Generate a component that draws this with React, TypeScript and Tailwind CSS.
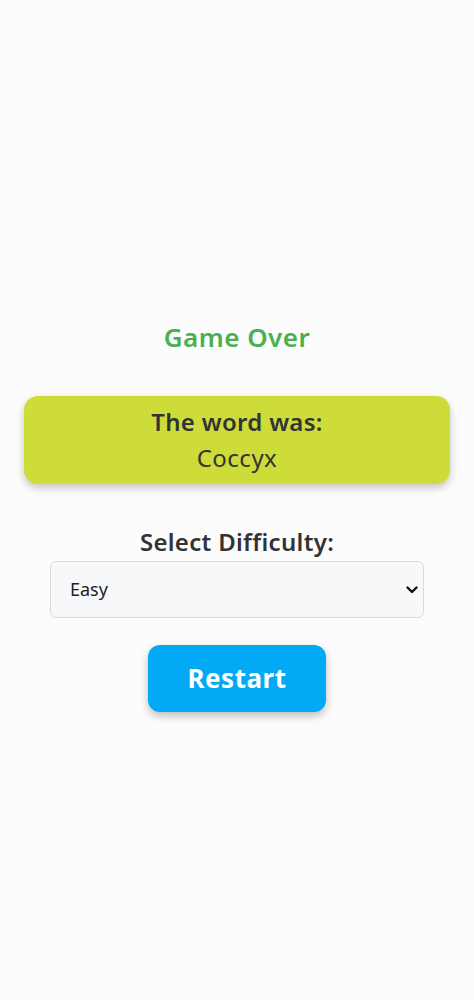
export default function App() {
  return (
    <div
      className="min-h-screen bg-[#fcfcfd] flex flex-col items-center pt-[318px]"
      style={{ fontFamily: '"Noto Sans", "Open Sans", sans-serif' }}
    >
      <h1 className="text-[26px] leading-[38px] font-semibold tracking-[0.5px] text-[#4caf50]">Game Over</h1>

      <div className="mt-[40px] w-[426px] rounded-[14px] bg-[#cddc39] shadow-[0_4px_8px_rgba(0,0,0,0.22)] py-[8px] flex flex-col items-center text-[#333333]">
        <p className="text-[24px] leading-[36px] font-semibold tracking-[0.3px]">The word was:</p>
        <p className="text-[24px] leading-[36px] tracking-[0.5px]">Coccyx</p>
      </div>

      <label className="mt-[40px] text-[24px] leading-[36px] font-semibold tracking-[0.3px] text-[#333333]">
        Select Difficulty:
      </label>
      <div className="relative mt-[1px] w-[374px]">
        <select className="w-full h-[57px] appearance-none rounded-[6px] border border-[#dcdcdc] bg-[#f7f8fa] pl-[19px] pr-[36px] text-[18px] text-[#222222]">
          <option>Easy</option>
          <option>Medium</option>
          <option>Hard</option>
        </select>
        <svg
          className="pointer-events-none absolute right-[6px] top-1/2 -translate-y-1/2"
          width="12"
          height="8"
          viewBox="0 0 12 8"
        >
          <path d="M1.5 1.5 L6 6 L10.5 1.5" fill="none" stroke="#111" strokeWidth="2.4" strokeLinecap="round" strokeLinejoin="round" />
        </svg>
      </div>

      <button className="mt-[27px] w-[178px] h-[67px] rounded-[12px] bg-[#03a9f4] text-white text-[26px] font-bold tracking-[0.5px] shadow-[0_4px_8px_rgba(0,0,0,0.25)]">
        Restart
      </button>
    </div>
  );
}
